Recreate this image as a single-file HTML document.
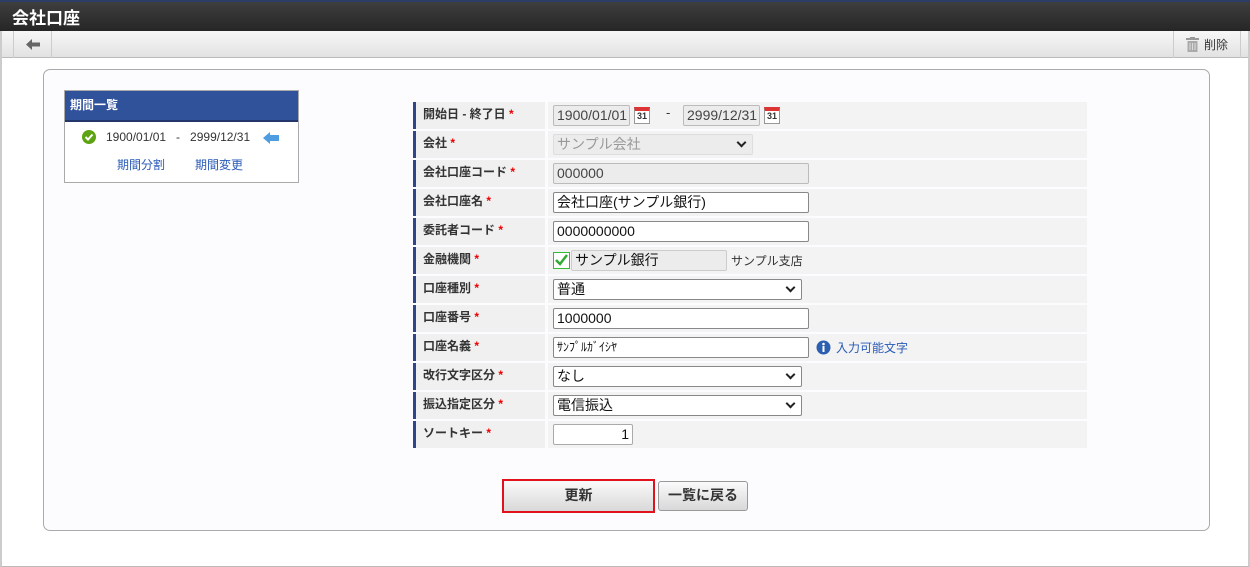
<!DOCTYPE html>
<html><head><meta charset="utf-8"><style>
*{box-sizing:border-box;margin:0;padding:0}
body{width:1250px;height:567px;overflow:hidden;background:#fff;font-family:"Liberation Sans","Noto Sans CJK JP",sans-serif;font-size:13px;color:#333;position:relative}
.frame{position:absolute;left:0;top:0;width:1250px;height:567px;border:1px solid #bbb;border-left:2px solid #ccc;border-right:2px solid #ccc}
.hdr{position:absolute;left:0;top:0;width:1250px;height:31px;background:linear-gradient(#3e3e3e,#262626);border-top:2px solid #2c3e66}
.hdr span{position:absolute;left:12px;top:2px;color:#fff;font-weight:bold;font-size:17px}
.tb{position:absolute;left:2px;top:31px;width:1246px;height:27px;background:linear-gradient(#f7f7f7,#e2e2e2);border-bottom:1px solid #bbb}
.tb .b1{position:absolute;left:11px;top:0;width:39px;height:27px;border-left:1px solid #ccc;border-right:1px solid #ccc}
.tb .b2{position:absolute;left:1171px;top:0;width:68px;height:27px;border-left:1px solid #ccc;border-right:1px solid #ccc;font-size:12px;padding:5px 0 0 30px}
.panel{position:absolute;left:43px;top:69px;width:1167px;height:462px;border:1px solid #aaa;border-radius:7px;background:#fcfcfe}
.per{position:absolute;left:64px;top:90px;width:235px;height:93px;border:1px solid #aaa;background:#fff}
.per .h{height:31px;background:#30529a;border-bottom:2px solid #23366a;color:#fff;font-weight:bold;font-size:12px;padding:5px 5px}
.lnk{color:#2a5bb8;font-size:12px;position:absolute}
.row{position:absolute;left:413px;width:674px;height:27px}
.lab{position:absolute;left:0;top:0;width:132px;height:27px;background:#f0f0f0;border-left:3px solid #30468a;font-weight:bold;font-size:12px;padding:3px 7px;color:#333}
.lab i{color:#e00;font-style:normal}
.val{position:absolute;left:135px;top:0;width:539px;height:27px;background:#f3f3f3}
.inp{position:absolute;top:3px;height:21px;border:1px solid #888;border-radius:2px;background:#fff;font-size:14px;padding:0 3px;line-height:19px;color:#111}
.dis{background:#ececec;border-color:#ccc;color:#444}
.sel::after{content:"";position:absolute;right:7px;top:4px;width:5px;height:5px;border-right:2px solid #222;border-bottom:2px solid #222;transform:rotate(45deg)}
.cal{position:absolute;top:5px;width:16px;height:17px;border:1px solid #999;border-top:4px solid #d33;background:#fff;font-size:9px;font-weight:bold;text-align:center;line-height:11px;color:#333}
.btn{position:absolute;top:481px;height:30px;border:1px solid #999;border-radius:3px;background:linear-gradient(#fafafa,#d8d8d8);font-size:14px;font-weight:bold;text-align:center;line-height:26px;color:#333}
</style></head><body>
<div class="frame"></div>
<div class="hdr"><span>会社口座</span></div>
<div class="tb"><div class="b1"><svg style="position:absolute;left:12px;top:8px" width="14" height="11"><path d="M0 5.5L6 0V3.5H14V7.5H6V11Z" fill="#666"/></svg></div>
<div class="b2"><svg style="position:absolute;left:12px;top:6px" width="13" height="15"><rect x="0" y="1" width="13" height="2" fill="#999"/><rect x="4" y="0" width="5" height="2" fill="#999"/><rect x="1.5" y="4" width="10" height="11" fill="#aaa"/><path d="M4 6V13M6.5 6V13M9 6V13" stroke="#ddd"/></svg>削除</div></div>
<div class="panel"></div>
<div class="per"><div class="h">期間一覧</div>
<svg style="position:absolute;left:17px;top:39px" width="14" height="14"><circle cx="7" cy="7" r="7" fill="#5da313"/><path d="M3.5 7L6 9.5L10.5 4.5" stroke="#fff" stroke-width="2" fill="none"/></svg>
<span style="position:absolute;left:41px;top:39px;font-size:12px">1900/01/01 &nbsp; - &nbsp; 2999/12/31</span>
<svg style="position:absolute;left:198px;top:41px" width="16" height="12"><path d="M0 6L7 0V3H16V9H7V12Z" fill="#4d9de0"/></svg>
<span class="lnk" style="left:52px;top:65px">期間分割</span><span class="lnk" style="left:130px;top:65px">期間変更</span></div>

<div class="row" style="top:102px"><div class="lab">開始日 - 終了日 <i>*</i></div><div class="val">
<div class="inp dis" style="left:5px;width:77px;border-color:#bbb">1900/01/01</div><div class="cal" style="left:86px">31</div><span style="position:absolute;left:118px;top:3px">-</span>
<div class="inp dis" style="left:135px;width:77px;border-color:#bbb">2999/12/31</div><div class="cal" style="left:216px">31</div></div></div>
<div class="row" style="top:131px"><div class="lab">会社 <i>*</i></div><div class="val"><div class="inp dis sel" style="left:5px;width:200px;color:#999;border-color:#ddd">サンプル会社</div></div></div>
<div class="row" style="top:160px"><div class="lab">会社口座コード <i>*</i></div><div class="val"><div class="inp dis" style="left:5px;width:256px;border-color:#bbb">000000</div></div></div>
<div class="row" style="top:189px"><div class="lab">会社口座名 <i>*</i></div><div class="val"><div class="inp" style="left:5px;width:256px">会社口座(サンプル銀行)</div></div></div>
<div class="row" style="top:218px"><div class="lab">委託者コード <i>*</i></div><div class="val"><div class="inp" style="left:5px;width:256px">0000000000</div></div></div>
<div class="row" style="top:247px"><div class="lab">金融機関 <i>*</i></div><div class="val">
<svg style="position:absolute;left:5px;top:5px" width="17" height="17"><rect x="0.5" y="0.5" width="16" height="16" fill="#fff" stroke="#3b3"/><path d="M3 8L7 12L14 3" stroke="#3a3" stroke-width="2.5" fill="none"/></svg>
<div class="inp dis" style="left:23px;width:156px;border-color:#ccc;color:#111">サンプル銀行</div><span style="position:absolute;left:183px;top:5px;font-size:12px">サンプル支店</span></div></div>
<div class="row" style="top:276px"><div class="lab">口座種別 <i>*</i></div><div class="val"><div class="inp sel" style="left:5px;width:249px">普通</div></div></div>
<div class="row" style="top:305px"><div class="lab">口座番号 <i>*</i></div><div class="val"><div class="inp" style="left:5px;width:256px">1000000</div></div></div>
<div class="row" style="top:334px"><div class="lab">口座名義 <i>*</i></div><div class="val"><div class="inp" style="left:5px;width:256px;font-size:12px">ｻﾝﾌﾟﾙｶﾞｲｼﾔ</div>
<svg style="position:absolute;left:268px;top:6px" width="15" height="15"><circle cx="7.5" cy="7.5" r="7" fill="#2d5fb0"/><circle cx="7.5" cy="4" r="1.3" fill="#fff"/><rect x="6.5" y="6" width="2" height="6" fill="#fff"/></svg>
<span class="lnk" style="left:288px;top:5px">入力可能文字</span></div></div>
<div class="row" style="top:363px"><div class="lab">改行文字区分 <i>*</i></div><div class="val"><div class="inp sel" style="left:5px;width:249px">なし</div></div></div>
<div class="row" style="top:392px"><div class="lab">振込指定区分 <i>*</i></div><div class="val"><div class="inp sel" style="left:5px;width:249px">電信振込</div></div></div>
<div class="row" style="top:421px"><div class="lab">ソートキー <i>*</i></div><div class="val"><div class="inp" style="left:5px;width:80px;text-align:right;border-color:#aaa">1</div></div></div>

<div class="btn" style="left:502px;top:479px;width:153px;height:34px;border:2px solid #e0121c;border-radius:0;line-height:28px">更新</div>
<div class="btn" style="left:658px;width:90px">一覧に戻る</div>
</body></html>
